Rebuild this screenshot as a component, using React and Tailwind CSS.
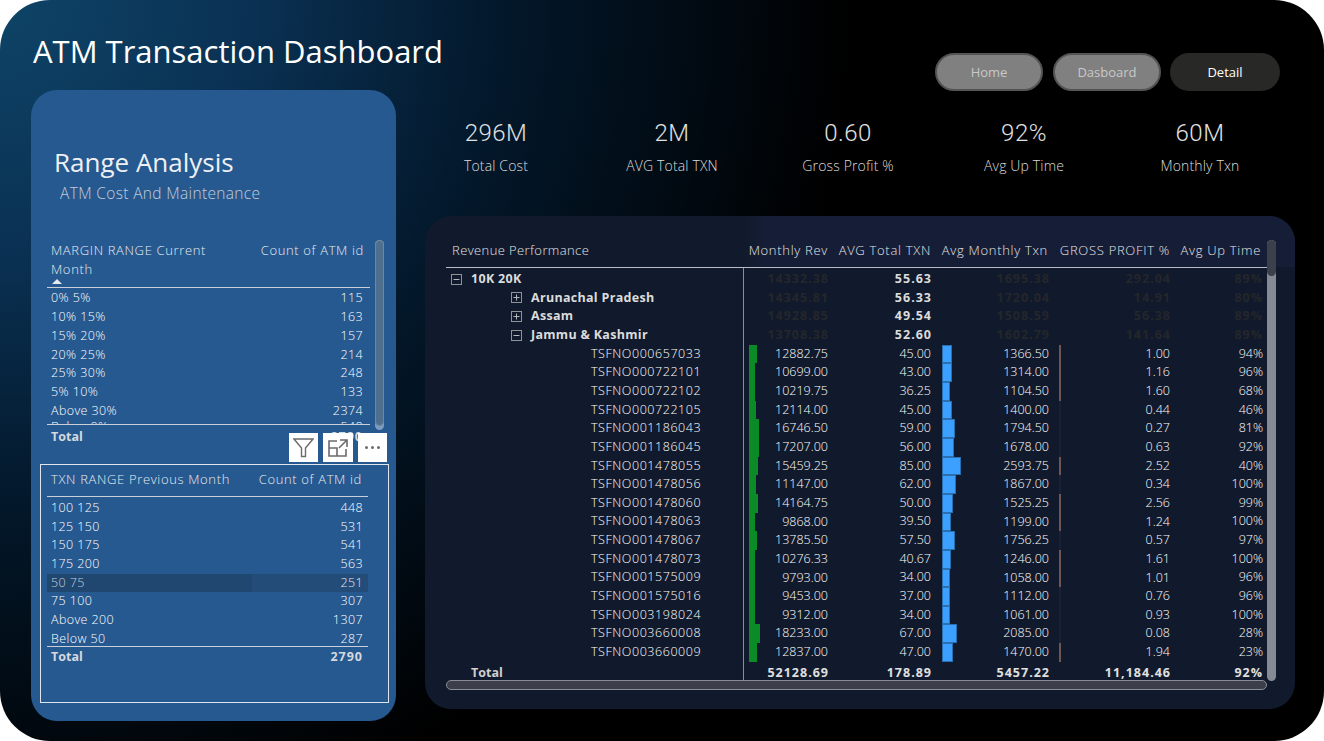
const FONT = "font-['Open_Sans','Noto_Sans',sans-serif]";

const marginRows = [
  ['0% 5%', '115'], ['10% 15%', '163'], ['15% 20%', '157'], ['20% 25%', '214'],
  ['25% 30%', '248'], ['5% 10%', '133'], ['Above 30%', '2374'],
];

const txnRows = [
  ['100 125', '448'], ['125 150', '531'], ['150 175', '541'], ['175 200', '563'],
  ['50 75', '251'], ['75 100', '307'], ['Above 200', '1307'], ['Below 50', '287'],
];

const kpis = [
  ['296M', 'Total Cost'], ['2M', 'AVG Total TXN'], ['0.60', 'Gross Profit %'],
  ['92%', 'Avg Up Time'], ['60M', 'Monthly Txn'],
];

const groups = [
  { indent: 'pl-[5px]', icon: 'minus', name: '10K 20K', vals: ['14332.38', '55.63', '1695.38', '292.04', '89%'] },
  { indent: 'pl-[65px]', icon: 'plus', name: 'Arunachal Pradesh', vals: ['14345.81', '56.33', '1720.04', '14.91', '80%'] },
  { indent: 'pl-[65px]', icon: 'plus', name: 'Assam', vals: ['14928.85', '49.54', '1508.59', '56.38', '89%'] },
  { indent: 'pl-[65px]', icon: 'minus', name: 'Jammu & Kashmir', vals: ['13708.38', '52.60', '1602.79', '141.64', '89%'] },
];

const atms = [
  ['TSFNO000657033', 12882.75, '45.00', 1366.5, '1.00', '94%'],
  ['TSFNO000722101', 10699, '43.00', 1314, '1.16', '96%'],
  ['TSFNO000722102', 10219.75, '36.25', 1104.5, '1.60', '68%'],
  ['TSFNO000722105', 12114, '45.00', 1400, '0.44', '46%'],
  ['TSFNO001186043', 16746.5, '59.00', 1794.5, '0.27', '81%'],
  ['TSFNO001186045', 17207, '56.00', 1678, '0.63', '92%'],
  ['TSFNO001478055', 15459.25, '85.00', 2593.75, '2.52', '40%'],
  ['TSFNO001478056', 11147, '62.00', 1867, '0.34', '100%'],
  ['TSFNO001478060', 14164.75, '50.00', 1525.25, '2.56', '99%'],
  ['TSFNO001478063', 9868, '39.50', 1199, '1.24', '100%'],
  ['TSFNO001478067', 13785.5, '57.50', 1756.25, '0.57', '97%'],
  ['TSFNO001478073', 10276.33, '40.67', 1246, '1.61', '100%'],
  ['TSFNO001575009', 9793, '34.00', 1058, '1.01', '96%'],
  ['TSFNO001575016', 9453, '37.00', 1112, '0.76', '96%'],
  ['TSFNO003198024', 9312, '34.00', 1061, '0.93', '100%'],
  ['TSFNO003660008', 18233, '67.00', 2085, '0.08', '28%'],
  ['TSFNO003660009', 12837, '47.00', 1470, '1.94', '23%'],
];

const headers = [
  ['Monthly Rev', 'w-[90px] pr-[5px]'],
  ['AVG Total TXN', 'w-[103px] pr-[5px]'],
  ['Avg Monthly Txn', 'w-[118px] pr-[6px]'],
  ['GROSS PROFIT %', 'w-[121px] pr-[5px]'],
  ['Avg Up Time', 'w-[92px] pr-[6px]'],
];

function Expander({ type }) {
  return (
    <svg width="11" height="11" viewBox="0 0 11 11" className="shrink-0">
      <rect x="0.5" y="0.5" width="10" height="10" fill="none" stroke="#8f9299" />
      <path d={type === 'plus' ? 'M2.5 5.5h6M5.5 2.5v6' : 'M2.5 5.5h6'} stroke="#b5b7bb" />
    </svg>
  );
}

function RangeRow({ label, value, right }) {
  return (
    <div className={`flex h-[18.7px] items-center justify-between pl-[4px] ${right} text-[12.5px] font-light tracking-[0.4px] text-white`}>
      <span>{label}</span>
      <span>{value}</span>
    </div>
  );
}

function NavButton({ label, active }) {
  return (
    <div
      className={
        active
          ? 'ml-[-1px] flex h-[38px] w-[110px] items-center justify-center rounded-[19px] bg-[#282826] pt-[1px] text-[13px] text-white'
          : 'flex h-[38px] w-[108px] items-center justify-center rounded-[19px] border-2 border-[#545454] bg-[#808080] pt-[1px] text-[13px] text-[#c9c9c9]'
      }
    >
      {label}
    </div>
  );
}

function GroupRow({ row }) {
  return (
    <div className="flex h-[18.67px] items-center text-[12.5px] font-bold">
      <div className={`flex w-[297px] items-center ${row.indent} tracking-[0.3px] text-[#dcdcdc]`}>
        <Expander type={row.icon} />
        <span className="ml-[9px]">{row.name}</span>
      </div>
      <div className="w-[90px] pr-[4px] text-right tracking-[1px] text-[#24262b]">{row.vals[0]}</div>
      <div className="w-[103px] pr-[4px] text-right tracking-[1px] text-[#dcdcdc]">{row.vals[1]}</div>
      <div className="w-[118px] pr-[4px] text-right tracking-[1px] text-[#24262b]">{row.vals[2]}</div>
      <div className="w-[121px] pr-[4px] text-right tracking-[1px] text-[#24262b]">{row.vals[3]}</div>
      <div className="w-[92px] pr-[4px] text-right tracking-[1px] text-[#24262b]">{row.vals[4]}</div>
    </div>
  );
}

function AtmRow({ row }) {
  const [id, rev, txn, monthly, gp, up] = row;
  const gpHigh = Number(gp) >= 1;
  return (
    <div className="flex h-[18.67px] items-center text-[12.5px] font-light text-white">
      <div className="w-[297px] pl-[145px] tracking-[0.55px]">{id}</div>
      <div className="relative h-full w-[90px] pr-[5px] text-right leading-[18.67px]">
        <div className="absolute inset-y-0 left-[6px] bg-[#0b8a28]" style={{ width: (rev / 18233) * 11 }} />
        {rev.toFixed(2)}
      </div>
      <div className="w-[103px] pr-[5px] text-right">{txn}</div>
      <div className="relative h-full w-[118px] pr-[5px] text-right leading-[18.67px]">
        <div className="absolute inset-y-0 left-[6px] border border-[#2a6fb0] bg-[#3ba0ff]" style={{ width: (monthly / 2593.75) * 19 }} />
        {monthly.toFixed(2)}
      </div>
      <div className="relative h-full w-[121px] pr-[5px] text-right leading-[18.67px]">
        <div className={gpHigh ? 'absolute inset-y-0 left-[5px] w-[2px] bg-[#6f5650]' : 'absolute inset-y-0 left-[5px] w-[2px] bg-[#182035]'} />
        {gp}
      </div>
      <div className="w-[92px] pr-[4px] text-right">{up}</div>
    </div>
  );
}

export default function App() {
  return (
    <div className={`h-[741px] w-[1324px] overflow-hidden bg-white ${FONT}`}>
      <div className="flex h-full rounded-[50px] bg-[radial-gradient(circle_at_top_left,#0e4467_0px,#0a3153_250px,#03182b_500px,#000000_850px)]">
        {/* left column */}
        <div className="w-[396px] shrink-0 pl-[31px]">
          <h1 className="h-[90px] whitespace-nowrap pl-[2px] pt-[29px] text-[31px] leading-[44px] text-white">ATM Transaction Dashboard</h1>
          <div className="relative h-[631px] w-[365px] rounded-[26px] bg-[#265990] pt-[54px]">
            <div className="h-[37px] pl-[23px] text-[26px] leading-[36px] text-[#eef0f3]">Range Analysis</div>
            <div className="h-[24px] pl-[29px] text-[15.5px] font-light leading-[24px] tracking-[0.35px] text-[#c2ccd9]">ATM Cost And Maintenance</div>

            {/* margin table */}
            <div className="relative ml-[16px] mt-[35px] w-[323px]">
              <div className="h-[48px] border-b border-[#c9d0d9] pl-[4px] pr-[6px] pt-[1px] text-[13px] font-light leading-[19px] tracking-[0.65px] text-[#e6e9ee]">
                <div className="flex justify-between">
                  <span className="w-[180px]">MARGIN RANGE Current Month</span>
                  <span>Count of ATM id</span>
                </div>
                <div className="ml-[1px] h-0 w-0 border-x-[5px] border-b-[5px] border-x-transparent border-b-[#e5e8ec]" />
              </div>
              <div className="h-[137px] overflow-hidden border-b border-[#c9d0d9] pt-[1.5px]">
                {marginRows.map(([label, value]) => (
                  <RangeRow key={label} label={label} value={value} right="pr-[7px]" />
                ))}
                {/* next row is cut off by the total line, only its top shows */}
                <div className="mt-[-2px]">
                  <RangeRow label="Below 0%" value="548" right="pr-[7px]" />
                </div>
              </div>
              <div className="flex h-[24px] items-center justify-between pl-[4px] pr-[7px] text-[12.5px] font-bold text-[#d5d9df]">
                <span>Total</span>
                <span className="tracking-[1px]">2790</span>
              </div>
            </div>

            {/* scroll bar of margin table */}
            <div className="absolute left-[344px] top-[150px] h-[190px] w-[9px] rounded-[5px] bg-[#7d9cbd]">
              <div className="h-[186px] rounded-[5px] border border-[#6e879f] bg-[#4f6f8f]" />
            </div>

            {/* hover toolbar */}
            <div className="absolute left-[258px] top-[343px] flex gap-[5px]">
              <div className="flex h-[29px] w-[29px] items-center justify-center bg-white">
                <svg width="21" height="21" viewBox="0 0 21 21" fill="none" stroke="#6b6b6b" strokeWidth="1.4">
                  <path d="M1 2h19l-7.5 9v8.5h-4V11z" />
                </svg>
              </div>
              <div className="flex h-[29px] w-[30px] items-center justify-center bg-white">
                <svg width="20" height="18" viewBox="0 0 20 18" fill="none" stroke="#6b6b6b" strokeWidth="1.6">
                  <path d="M9 2H1v15h17v-7M1 9h8v8M12 1h7v7M19 1l-8 8" />
                </svg>
              </div>
              <div className="flex h-[29px] w-[29px] items-center justify-center gap-[3px] bg-white">
                <span className="h-[3px] w-[3px] rounded-full bg-[#6b6b6b]" />
                <span className="h-[3px] w-[3px] rounded-full bg-[#6b6b6b]" />
                <span className="h-[3px] w-[3px] rounded-full bg-[#6b6b6b]" />
              </div>
            </div>

            {/* txn table */}
            <div className="ml-[9px] mt-[15px] h-[239px] w-[349px] border border-[#dfe5ec] pl-[6px] pt-[3px]">
              <div className="flex h-[29px] w-[321px] items-start justify-between border-b border-[#c9d0d9] pl-[4px] pr-[6px] pt-[2px] text-[13px] font-light leading-[19px] tracking-[0.65px] text-[#e6e9ee]">
                <span>TXN RANGE Previous Month</span>
                <span>Count of ATM id</span>
              </div>
              <div className="h-[149px] w-[321px] pt-[2px]">
                {txnRows.map(([label, value]) =>
                  label === '50 75' ? (
                    <div key={label} className="flex h-[18.7px] items-center justify-between bg-[linear-gradient(to_right,#20476f_64%,#234c78_64%)] pl-[4px] pr-[5px] text-[12.5px] font-light tracking-[0.4px] text-[#c4ccd6]">
                      <span>{label}</span>
                      <span className="text-[#e2e6eb]">{value}</span>
                    </div>
                  ) : (
                    <RangeRow key={label} label={label} value={value} right="pr-[5px]" />
                  ),
                )}
              </div>
              <div className="flex h-[21px] w-[321px] items-center justify-between border-t border-[#c9d0d9] pl-[4px] pr-[5px] text-[12.5px] font-bold text-[#d5d9df]">
                <span>Total</span>
                <span className="tracking-[1px]">2790</span>
              </div>
            </div>
          </div>
        </div>

        {/* right column */}
        <div className="min-w-0 flex-1 pt-[53px]">
          <div className="flex gap-[10px] pl-[539px]">
            <NavButton label="Home" />
            <NavButton label="Dasboard" />
            <NavButton label="Detail" active />
          </div>

          <div className="ml-[12px] mt-[24px] flex w-[880px]">
            {kpis.map(([value, label]) => (
              <div key={label} className="w-[176px] text-center">
                <div className="h-[36px] font-['Roboto',sans-serif] text-[24px] font-light leading-[36px] tracking-[0.5px] text-[#e0e0e0]">{value}</div>
                <div className="mt-[5px] text-[14px] font-light leading-[20px] tracking-[0.15px] text-[#dcdcdc]">{label}</div>
              </div>
            ))}
          </div>

          {/* revenue table */}
          <div className="relative ml-[29px] mt-[40px] h-[493px] w-[870px] rounded-[26px] bg-[#111a2c] pl-[21px] pt-[25px]">
            <div className="absolute right-0 top-0 h-[51px] w-[550px] rounded-tr-[26px] bg-[linear-gradient(90deg,#111a2c,#161d36_20px)]" />
            <div className="relative flex h-[27px] w-[821px] items-start border-b border-[#b9bcc2] text-[13px] font-light leading-[18px] tracking-[0.7px] text-[#e2e4e7]">
              <div className="w-[297px] pl-[6px] tracking-[0.4px]">Revenue Performance</div>
              {headers.map(([label, cls]) => (
                <div key={label} className={`${cls} whitespace-nowrap text-right`}>{label}</div>
              ))}
            </div>
            <div className="relative h-[412px] w-[821px] pt-[2px]">
              {groups.map((row) => (
                <GroupRow key={row.name} row={row} />
              ))}
              {atms.map((row) => (
                <AtmRow key={row[0]} row={row} />
              ))}
              <div className="flex h-[18px] items-center pt-[5px] text-[12.5px] font-bold tracking-[1px] text-[#e0e0e0]">
                <div className="w-[297px] pl-[25px] tracking-normal text-[#d0d0d0]">Total</div>
                <div className="w-[90px] pr-[4px] text-right">52128.69</div>
                <div className="w-[103px] pr-[4px] text-right">178.89</div>
                <div className="w-[118px] pr-[4px] text-right">5457.22</div>
                <div className="w-[121px] pr-[4px] text-right">11,184.46</div>
                <div className="w-[92px] pr-[4px] text-right">92%</div>
              </div>
              <div className="absolute inset-y-0 left-[297px] w-px bg-[#8b8e94]" />
            </div>
            <div className="h-[10px] w-[821px] rounded-[5px] border border-[#8a8d95] bg-[#3c3f4a]" />

            {/* vertical scroll bar */}
            <div className="absolute left-[842px] top-[24px] h-[441px] w-[9px] rounded-[5px] bg-[#868a94]">
              <div className="h-[36px] rounded-[5px] bg-[#3c404a]" />
            </div>
          </div>
        </div>
      </div>
    </div>
  );
}
